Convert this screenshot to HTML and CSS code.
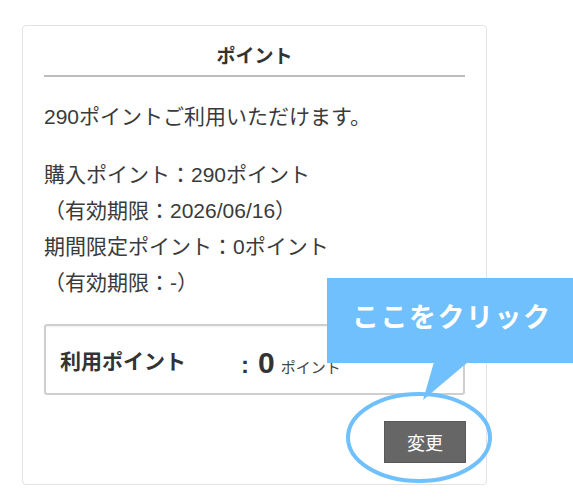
FILE: index.html
```html
<!DOCTYPE html>
<html lang="ja">
<head>
<meta charset="utf-8">
<link rel="stylesheet" href="styles.css">
</head>
<body>
<div class="card">
  <h2 class="card-title">ポイント</h2>
  <p class="para">290ポイントご利用いただけます。</p>
  <p class="para">購入ポイント：290ポイント<br>（有効期限：2026/06/16）<br>期間限定ポイント：0ポイント<br>（有効期限：-）</p>
  <div class="use-row">
    <span class="use-label">利用ポイント</span>
    <span class="use-value"><span class="colon">:</span><span class="num">0</span><span class="unit">ポイント</span></span>
  </div>
  <div class="actions">
    <button class="btn" type="button">変更</button>
  </div>
</div>
<div class="callout">ここをクリック</div>
<svg class="annot" width="573" height="504" viewBox="0 0 573 504">
  <polygon points="434,362 468,362 423,400" fill="#6fc0fc"/>
  <ellipse cx="419" cy="437.5" rx="71" ry="43.5" fill="none" stroke="#6fc0fc" stroke-width="4"/>
</svg>
</body>
</html>
```
FILE: styles.css
```css
html, body {
  margin: 0;
  padding: 0;
  background: #fff;
}
body {
  width: 573px;
  height: 504px;
  position: relative;
  overflow: hidden;
  font-family: "Liberation Sans", "Noto Sans CJK JP", sans-serif;
  color: #333;
}
.card {
  box-sizing: border-box;
  margin: 25px 0 0 22px;
  width: 465px;
  height: 460px;
  border: 1px solid #e3e3e3;
  border-radius: 4px;
  padding: 18px 21px 20px 21px;
  display: flex;
  flex-direction: column;
}
.card-title {
  margin: 0;
  font-size: 19px;
  line-height: 26px;
  font-weight: bold;
  text-align: center;
  padding-bottom: 5px;
  border-bottom: 2px solid #bdbdbd;
  color: #333;
}
.para {
  margin: 22px 0 0 0;
  font-size: 21px;
  line-height: 36px;
  color: #3a3a3a;
}
.use-row {
  box-sizing: border-box;
  margin-top: 23px;
  height: 71px;
  border: 2px solid #cfcfcf;
  border-radius: 3px;
  box-shadow: inset 0 1px 2px rgba(0,0,0,0.06);
  display: flex;
  align-items: center;
  padding-left: 14px;
}
.use-label {
  width: 181px;
  font-size: 21px;
  font-weight: bold;
  color: #333;
}
.use-value {
  display: flex;
  align-items: baseline;
  margin-top: 6px;
}
.colon {
  font-size: 24px;
  font-weight: bold;
  margin-right: 9px;
}
.num {
  font-size: 30px;
  font-weight: bold;
  margin-right: 6px;
}
.unit {
  font-size: 15px;
  color: #444;
}
.actions {
  margin-top: 26px;
  display: flex;
  justify-content: flex-end;
  margin-right: -1px;
}
.btn {
  width: 82px;
  height: 42px;
  background: #666;
  color: #fff;
  border: 1px solid #5a5a5a;
  font-family: "Liberation Sans", "Noto Sans CJK JP", sans-serif;
  font-size: 18px;
  padding: 0;
}
.callout {
  position: absolute;
  left: 327px;
  top: 278px;
  width: 246px;
  height: 85px;
  box-sizing: border-box;
  background: #6fc0fc;
  color: #fff;
  font-size: 27px;
  font-weight: bold;
  letter-spacing: 1.5px;
  line-height: 80px;
  padding-left: 25px;
  white-space: nowrap;
}
.annot {
  position: absolute;
  left: 0;
  top: 0;
  pointer-events: none;
}
```
